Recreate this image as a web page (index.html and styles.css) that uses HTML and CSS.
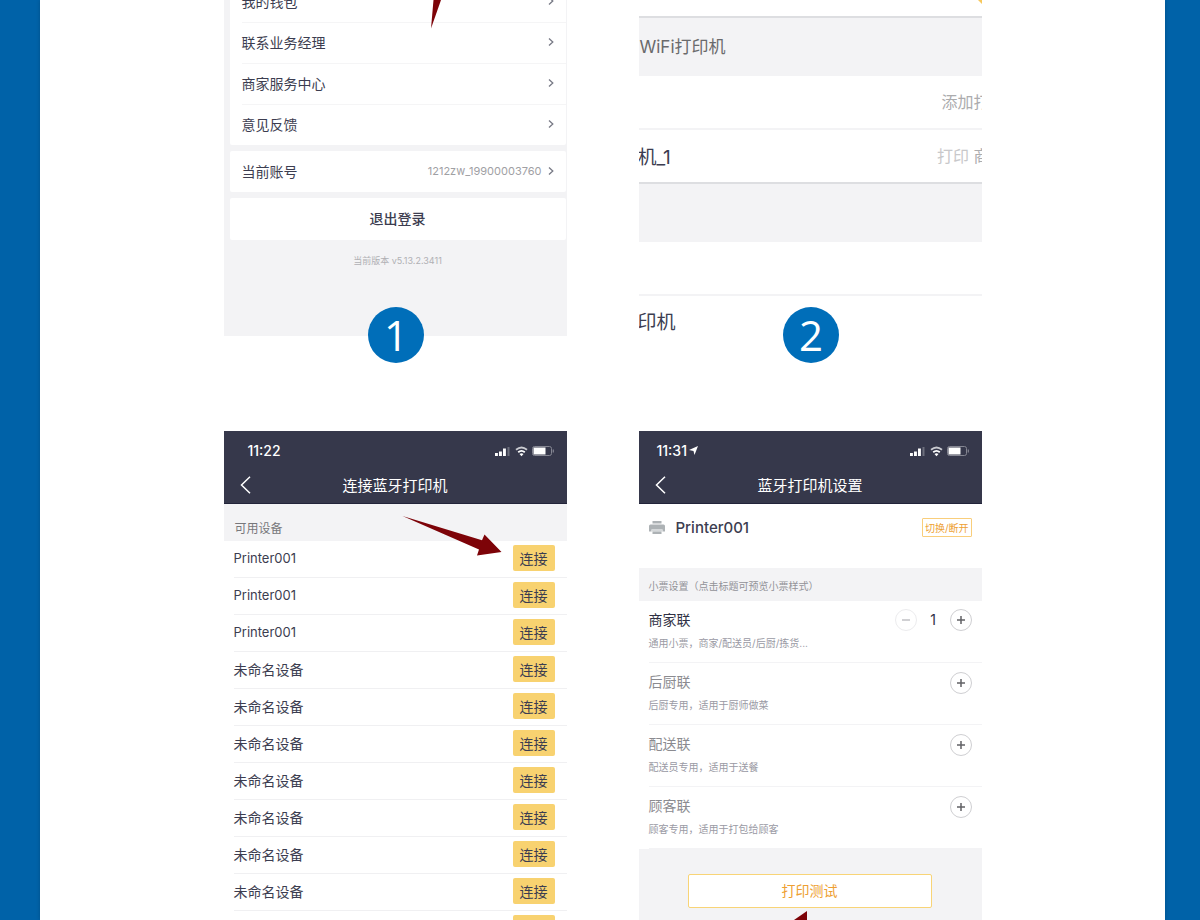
FILE: index.html
```
<!DOCTYPE html>
<html lang="zh-CN">

<head>
	<meta charset="utf-8">
	<meta name="viewport" content="width=device-width, initial-scale=1">
	<title>连接蓝牙打印机</title>
	<link rel="stylesheet" href="styles.css">
</head>

<body>
	<svg width="0" height="0" class="defs">
		<symbol id="chevron" viewBox="0 0 6 8">
			<path d="M1 .5 4.8 4 1 7.5" fill="none" stroke="currentColor" stroke-width="1.3"/>
		</symbol>
		<symbol id="back" viewBox="0 0 12 18">
			<path d="M10 .8 1.500 9l8.500 8.200" fill="none" stroke="currentColor" stroke-width="1.500"/>
		</symbol>
		<symbol id="status" viewBox="0 0 60 12">
			<path d="M0 8h2.900v3H0zM4 6.500h2.900V11H4zM8 3.500h2.900V11H8z" fill="#fff"/>
			<path d="M12.500 2h2v9h-2z" fill="#6d6f7d"/>
			<path d="M21 4.800Q26.500.2 32 4.800" fill="none" stroke="#c9cad0" stroke-width="1.800"/>
			<path d="M23.200 7.300q3.300-2.900 6.600 0" fill="none" stroke="#fff" stroke-width="1.800"/>
			<path d="M24.500 9q2-1.600 4 0l-2 2.300z" fill="#fff"/>
			<rect x="37.500" y="1.500" width="19" height="9" rx="2" fill="none" stroke="#858692"/>
			<rect x="38.500" y="2.500" width="12" height="7" fill="#fff"/>
			<path d="M58.300 4.500v3" stroke="#858692" stroke-width="1.200"/>
		</symbol>
		<symbol id="plus" viewBox="0 0 8 8">
			<path d="M0 4h8M4 0v8" stroke="currentColor" stroke-width="1.500"/>
		</symbol>
		<symbol id="minus" viewBox="0 0 8 8">
			<path d="M0 4h8" stroke="currentColor" stroke-width="1.500"/>
		</symbol>
	</svg>

	<main class="page">
		<div class="steps">

			<section class="step">
				<div class="screen account">
					<div class="card first">
						<a class="item" href="#">我的钱包<svg class="chevron"><use href="#chevron"/></svg></a>
						<a class="item" href="#">联系业务经理<svg class="chevron"><use href="#chevron"/></svg></a>
						<a class="item" href="#">商家服务中心<svg class="chevron"><use href="#chevron"/></svg></a>
						<a class="item" href="#">意见反馈<svg class="chevron"><use href="#chevron"/></svg></a>
					</div>
					<div class="card">
						<a class="item" href="#">当前账号<span class="user">1212zw_19900003760</span><svg class="chevron"><use href="#chevron"/></svg></a>
					</div>
					<button class="card logout">退出登录</button>
					<p class="version">当前版本 v5.13.2.3411</p>
				</div>
				<svg class="pointer" viewBox="0 0 343 336"><path d="M209.500 0h7.500l-10 28.500z"/></svg>
				<span class="number">1</span>
			</section>

			<section class="step">
				<div class="screen printers">
					<div class="top-edge"></div>
					<h2 class="band">WiFi打印机</h2>
					<div class="line"><a class="more" href="#">添加打</a></div>
					<div class="line last"><span class="device">机_1</span><span class="more"><i>打印</i> 商</span></div>
					<div class="band"></div>
					<div class="line"></div>
					<div class="line open"><span class="device">印机</span></div>
				</div>
				<svg class="corner" viewBox="0 0 4 4"><path d="M0 0h4v4z"/></svg>
				<span class="number">2</span>
			</section>

			<section class="step">
				<div class="screen">
					<header class="bar">
						<div class="status"><b>11:22</b><svg class="signals"><use href="#status"/></svg></div>
						<div class="title">
							<button class="back" aria-label="返回"><svg><use href="#back"/></svg></button>
							<h2>连接蓝牙打印机</h2>
						</div>
					</header>
					<h3 class="available">可用设备</h3>
					<ul class="devices">
						<li><span class="latin">Printer001</span><button class="connect">连接</button></li>
						<li><span class="latin">Printer001</span><button class="connect">连接</button></li>
						<li><span class="latin">Printer001</span><button class="connect">连接</button></li>
						<li>未命名设备<button class="connect">连接</button></li>
						<li>未命名设备<button class="connect">连接</button></li>
						<li>未命名设备<button class="connect">连接</button></li>
						<li>未命名设备<button class="connect">连接</button></li>
						<li>未命名设备<button class="connect">连接</button></li>
						<li>未命名设备<button class="connect">连接</button></li>
						<li>未命名设备<button class="connect">连接</button></li>
						<li>未命名设备<button class="connect">连接</button></li>
					</ul>
				</div>
				<svg class="pointer" viewBox="0 0 343 489"><path d="M178.500 85 258 109.300 260.500 103.500 277.500 121 253 124.500 255 118.500z"/></svg>
			</section>

			<section class="step">
				<div class="screen">
					<header class="bar">
						<div class="status near"><b>11:31</b><svg class="arrow" viewBox="0 0 9 9"><path d="M9 0 5.500 9 4.500 5 0 4z" fill="#fff"/></svg><svg class="signals"><use href="#status"/></svg></div>
						<div class="title">
							<button class="back" aria-label="返回"><svg><use href="#back"/></svg></button>
							<h2>蓝牙打印机设置</h2>
						</div>
					</header>
					<div class="current">
						<svg class="printer" viewBox="0 0 16 14"><path d="M3.500 0h9v2.500h-9zM1.500 3.500h13Q16 3.500 16 5v5.500h-2.500v-2h-11v2H0V5Q0 3.500 1.500 3.500z" fill="#adb2b5"/><path d="M2.500 8.500h11v2h-11z" fill="#d5d8da"/><path d="M3.500 10.500h9V13h-9z" fill="#adb2b5"/></svg>
						<strong>Printer001</strong>
						<button class="switch">切换/断开</button>
					</div>
					<h3 class="hint">小票设置（点击标题可预览小票样式）</h3>
					<ul class="tickets">
						<li class="on">
							<div class="head"><span>商家联</span>
								<span class="count">
									<button class="round off" aria-label="减少"><svg><use href="#minus"/></svg></button>
									<output>1</output>
									<button class="round" aria-label="增加"><svg><use href="#plus"/></svg></button>
								</span>
							</div>
							<p>通用小票，商家/配送员/后厨/拣货...</p>
						</li>
						<li>
							<div class="head"><span>后厨联</span><button class="round" aria-label="增加"><svg><use href="#plus"/></svg></button></div>
							<p>后厨专用，适用于厨师做菜</p>
						</li>
						<li>
							<div class="head"><span>配送联</span><button class="round" aria-label="增加"><svg><use href="#plus"/></svg></button></div>
							<p>配送员专用，适用于送餐</p>
						</li>
						<li>
							<div class="head"><span>顾客联</span><button class="round" aria-label="增加"><svg><use href="#plus"/></svg></button></div>
							<p>顾客专用，适用于打包给顾客</p>
						</li>
					</ul>
					<div class="footer">
						<button class="test">打印测试</button>
					</div>
				</div>
				<svg class="pointer" viewBox="0 0 343 489"><path d="M168 480v9h-13z"/></svg>
			</section>

		</div>
	</main>
</body>

</html>
```
FILE: styles.css
```
* {
	box-sizing: border-box;
}

body {
	margin: 0;
	padding: 0 35px 0 40px;
	background-color: #0062a8;
	font-family: Inter, "Noto Sans CJK SC", sans-serif;
	font-size: 14px;
	color: #3c3d50;
}

h2, h3, p, ul {
	margin: 0;
	padding: 0;
	font-weight: 400;
	list-style: none;
}

a {
	color: inherit;
	text-decoration: none;
}

button {
	padding: 0;
	border: 0;
	background: none;
	font-family: inherit;
	font-size: 14px;
	color: inherit;
}

.defs {
	position: absolute;
}

.page {
	height: 100vh;
	overflow: hidden;
	background-color: #fff;
	box-shadow: 0 0 4px rgba(0, 0, 0, 0.2);
}

.steps {
	display: grid;
	grid-template-columns: 1fr 1fr;
	gap: 95px 72px;
	max-width: 758px;
	margin: 0 auto;
}

.step {
	position: relative;
}

.screen {
	height: 100%;
	overflow: hidden;
}

.number {
	position: absolute;
	bottom: -27px;
	left: 50%;
	width: 56px;
	height: 56px;
	margin-left: -27px;
	border-radius: 50%;
	background-color: #006eb9;
	color: #fff;
	font-family: "Open Sans", sans-serif;
	font-size: 42px;
	line-height: 56px;
	text-align: center;
}

.pointer {
	position: absolute;
	top: 0;
	left: 0;
	width: 100%;
	fill: #7d0308;
	pointer-events: none;
}

.corner {
	position: absolute;
	top: 0;
	right: 0;
	width: 4px;
	height: 4px;
	fill: #f7c85c;
}

/* account */

.account {
	display: flex;
	flex-direction: column;
	gap: 6px;
	padding: 0 1px 0 6px;
	background-color: #f3f3f5;
}

.card {
	border-radius: 2px;
	background-color: #fff;
}

.first {
	margin-top: -19px;
}

.item {
	display: flex;
	align-items: center;
	height: 41px;
	margin-left: 12px;
	padding: 0 12px 2px 0;
}

.item + .item {
	border-top: 1px solid #f5f5f6;
}

.chevron {
	width: 6px;
	height: 8px;
	margin-left: auto;
	color: #777985;
}

.user {
	margin-left: auto;
	font-size: 11px;
	color: #a0a0a4;
}

.user + .chevron {
	margin-left: 6px;
}

.logout {
	height: 42px;
	padding-bottom: 2px;
	font-weight: 500;
}

.version {
	height: 90px;
	padding-top: 8px;
	font-size: 9px;
	line-height: 14px;
	text-align: center;
	color: #b0b0b4;
}

/* wifi printers */

.top-edge {
	height: 18px;
	border-bottom: 2px solid #dddee1;
}

.band {
	height: 58px;
	padding-left: 1px;
	background-color: #f3f3f5;
	font-size: 17px;
	line-height: 58px;
	color: #6a6a6c;
}

.line {
	display: flex;
	align-items: center;
	height: 54px;
	padding-bottom: 2px;
	border-bottom: 2px solid #f3f3f5;
}

.last {
	border-color: #dddee1;
}

.open {
	height: 40px;
	padding-top: 10px;
	border: 0;
}

.device {
	margin-left: -1px;
	font-size: 19px;
}

.more {
	margin: 0 -8px 0 auto;
	font-size: 16px;
	color: #acacae;
}

.more i {
	font-style: normal;
	color: #c8c8ca;
}

/* phone header */

.bar {
	height: 73px;
	border-bottom: 1px solid #22243a;
	background-color: #36384b;
	color: #fff;
}

.status {
	display: flex;
	align-items: center;
	height: 39px;
	padding: 0 12px 0 24px;
}

.status b {
	font-weight: 500;
}

.near {
	padding-left: 18px;
}

.signals {
	width: 60px;
	height: 12px;
	margin-left: auto;
}

.arrow {
	width: 9px;
	height: 9px;
	margin-left: 2px;
}

.title {
	display: grid;
	grid-template-columns: 12px 1fr 12px;
	align-items: center;
	height: 30px;
	padding: 0 16px;
}

.title h2 {
	padding-bottom: 2px;
	font-size: 15px;
	text-align: center;
}

.back svg {
	display: block;
	width: 12px;
	height: 18px;
}

/* device list */

.available {
	height: 37px;
	padding: 14px 11px 0;
	background-color: #f3f3f5;
	font-size: 12px;
	line-height: 22px;
	color: #77777b;
}

.devices li {
	display: flex;
	align-items: center;
	justify-content: space-between;
	height: 37px;
	margin-left: 10px;
	padding: 0 12px 2px 0;
	border-bottom: 1px solid #f0f0f2;
}

.latin {
	font-size: 13px;
}

.connect {
	width: 42px;
	height: 26px;
	padding-bottom: 1px;
	border-radius: 2px;
	background-color: #f8d270;
}

/* printer settings */

.current {
	display: flex;
	align-items: center;
	height: 64px;
	padding: 0 10px 17px;
}

.current strong {
	margin-left: 11px;
	font-size: 15px;
	font-weight: 500;
}

.printer {
	width: 16px;
	height: 14px;
}

.switch {
	height: 19px;
	margin-left: auto;
	padding: 0 2px;
	border: 1px solid #f9ce7b;
	border-radius: 1px;
	font-size: 10px;
	line-height: 16px;
	color: #ee9f33;
}

.hint {
	height: 33px;
	padding: 0 10px;
	background-color: #f3f3f5;
	font-size: 10px;
	line-height: 36px;
	color: #929298;
}

.tickets li {
	height: 62px;
	margin-left: 10px;
	padding: 9px 10px 0 0;
	border-bottom: 1px solid #f3f3f5;
}

.head {
	display: flex;
	align-items: center;
	justify-content: space-between;
	height: 22px;
	line-height: 18px;
	padding-bottom: 1px;
	color: #8b8b90;
}

.head > span {
	padding-bottom: 2px;
}

.on .head {
	color: #2f3044;
}

.tickets p {
	margin-top: 3px;
	font-size: 10px;
	line-height: 16px;
	color: #9a9aa4;
}

.count {
	display: flex;
	align-items: center;
}

.count output {
	width: 33px;
	text-align: center;
}

.round {
	display: flex;
	align-items: center;
	justify-content: center;
	width: 22px;
	height: 22px;
	border: 1px solid #cfcfd2;
	border-radius: 50%;
	color: #626266;
}

.round svg {
	width: 8px;
	height: 8px;
}

.off {
	border-color: #ececee;
	color: #c0c0c4;
}

.footer {
	height: 120px;
	padding: 25px 50px 0 49px;
	background-color: #f3f3f5;
}

.test {
	width: 100%;
	height: 34px;
	padding-bottom: 2px;
	border: 1px solid #f8d477;
	border-radius: 2px;
	background-color: #fff;
	color: #ee9f33;
}
```
